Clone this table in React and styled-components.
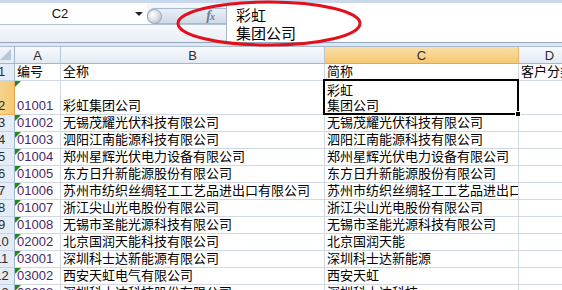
import React from 'react';
import styled, { createGlobalStyle } from 'styled-components';

const Global = createGlobalStyle`
  html, body { margin: 0; padding: 0; background: #fff; }
  body { font-family: "Liberation Sans", "Noto Sans CJK SC", sans-serif; }
  * { box-sizing: border-box; }
`;

const Screen = styled.div`
  position: relative;
  width: 562px;
  height: 290px;
  overflow: hidden;
  background: #fff;
`;

const FormulaBar = styled.div`
  display: flex;
  height: 42px;
  border-top: 3px solid #c9d8ea;
`;

const LeftPane = styled.div`
  display: flex;
  flex-direction: column;
  width: 226px;
`;

const NameRow = styled.div`
  display: flex;
  height: 22px;
`;

const NameBox = styled.div`
  display: flex;
  align-items: center;
  width: 147px;
  background: #fff;
  border-bottom: 1px solid #b4c3d6;
`;

const NameText = styled.span`
  width: 120px;
  text-align: center;
  font-size: 13px;
  color: #111;
`;

const Arrow = styled.span`
  margin-left: auto;
  margin-right: 4px;
  width: 0;
  height: 0;
  border-left: 4px solid transparent;
  border-right: 4px solid transparent;
  border-top: 4px solid #222;
`;

const ButtonStrip = styled.div`
  flex: 1;
  padding-top: 5px;
  background: #f2f6fb;
  border-bottom: 1px solid #b4c3d6;
`;

const Pill = styled.div`
  display: flex;
  align-items: center;
  height: 16px;
  border: 1px solid #a9bace;
  border-right: none;
  border-radius: 8px 0 0 8px;
  background: linear-gradient(#e9eff6, #cfdae7);
`;

const RoundButton = styled.span`
  width: 15px;
  height: 15px;
  margin-left: -1px;
  border-radius: 50%;
  border: 1px solid #9ba7b5;
  background: radial-gradient(circle at 35% 35%, #ffffff 0%, #dfe3e8 45%, #aab3be 100%);
`;

const Fx = styled.span`
  margin-left: auto;
  margin-right: 12px;
  font-family: "Liberation Serif", serif;
  font-style: italic;
  font-weight: bold;
  font-size: 14px;
  color: #6c7d93;
  letter-spacing: -1px;
`;

const FxSub = styled.span`
  font-size: 10px;
`;

const Filler = styled.div`
  flex: 1;
  background: linear-gradient(#f6f9fc, #e8eef5);
`;

const FormulaInput = styled.div`
  flex: 1;
  background: #fff;
  border-left: 1px solid #a7b7cb;
  padding: 3px 9px 0;
  font-family: "Noto Sans CJK SC", sans-serif;
  font-size: 15px;
  line-height: 18px;
  color: #000;
`;

const Separator = styled.div`
  height: 5px;
  border-top: 1px solid #94a7bf;
  border-bottom: 1px solid #a9bbd1;
  background: #dde6f1;
`;

const Grid = styled.div`
  display: grid;
  grid-template-columns: 26px 46px 264px 194px 62px 120px;
  grid-template-rows: 17px 17px 34px repeat(11, 17px);
  margin-left: -11px;
`;

const ColHead = styled.div`
  display: flex;
  align-items: center;
  justify-content: center;
  font-size: 13px;
  color: #2d2d2d;
  border-right: 1px solid ${(p) => (p.$sel ? '#f2b35a' : '#b5c6da')};
  border-bottom: 1px solid ${(p) => (p.$sel ? '#f2a34a' : '#9eb6ce')};
  background: ${(p) =>
    p.$sel ? 'linear-gradient(#fadfaa, #f4c872)' : 'linear-gradient(#f8fafd, #e3eaf4)'};
`;

const Corner = styled.div`
  position: relative;
  border-right: 1px solid #9eb6ce;
  border-bottom: 1px solid #9eb6ce;
  background: linear-gradient(#f3f6fa, #e3eaf4);
  &::after {
    content: '';
    position: absolute;
    right: 3px;
    bottom: 3px;
    width: 0;
    height: 0;
    border-left: 11px solid transparent;
    border-bottom: 11px solid #b6c7dc;
  }
`;

const RowHead = styled.div`
  display: flex;
  align-items: flex-end;
  justify-content: center;
  padding-bottom: 1px;
  font-size: 13px;
  line-height: 15px;
  color: #2d2d2d;
  border-right: 1px solid ${(p) => (p.$sel ? '#f2a34a' : '#9eb6ce')};
  border-bottom: 1px solid ${(p) => (p.$sel ? '#f2b35a' : '#c5d3e3')};
  background: ${(p) =>
    p.$sel ? 'linear-gradient(90deg, #f9dba2, #f4c872)' : '#e4ecf7'};
`;

const Cell = styled.div`
  position: relative;
  display: flex;
  flex-direction: column;
  justify-content: flex-end;
  padding: 0 2px 1px 2px;
  white-space: nowrap;
  overflow: ${(p) => (p.$active || p.$spill ? 'visible' : 'hidden')};
  font-size: 13px;
  line-height: 15px;
  color: ${(p) => (p.$code ? '#47286b' : '#000')};
  border-right: 1px solid ${(p) => (p.$spill ? 'transparent' : '#d0d7e5')};
  border-bottom: 1px solid #d0d7e5;
  ${(p) =>
    p.$flag &&
    `&::before {
      content: '';
      position: absolute;
      top: 0;
      left: 0;
      width: 0;
      height: 0;
      border-top: 6px solid #1c8c1c;
      border-right: 6px solid transparent;
    }`}
`;

const Selection = styled.div`
  position: absolute;
  left: -2px;
  top: -2px;
  right: -1px;
  bottom: -1px;
  border: 2px solid #000;
  z-index: 2;
  pointer-events: none;
`;

const FillHandle = styled.div`
  position: absolute;
  right: -4px;
  bottom: -4px;
  width: 6px;
  height: 6px;
  background: #000;
  border: 1px solid #fff;
`;

const Ellipse = styled.svg`
  position: absolute;
  left: 174px;
  top: 0;
  z-index: 5;
  pointer-events: none;
`;

const rows = [
  ['01002', '无锡茂耀光伏科技有限公司', '无锡茂耀光伏科技有限公司'],
  ['01003', '泗阳江南能源科技有限公司', '泗阳江南能源科技有限公司'],
  ['01004', '郑州星辉光伏电力设备有限公司', '郑州星辉光伏电力设备有限公司'],
  ['01005', '东方日升新能源股份有限公司', '东方日升新能源股份有限公司'],
  ['01006', '苏州市纺织丝绸轻工工艺品进出口有限公司', '苏州市纺织丝绸轻工工艺品进出口有限公司'],
  ['01007', '浙江尖山光电股份有限公司', '浙江尖山光电股份有限公司'],
  ['01008', '无锡市圣能光源科技有限公司', '无锡市圣能光源科技有限公司'],
  ['02002', '北京国润天能科技有限公司', '北京国润天能'],
  ['03001', '深圳科士达新能源有限公司', '深圳科士达新能源'],
  ['03002', '西安天虹电气有限公司', '西安天虹'],
  ['03003', '深圳科士达科技股份有限公司', '深圳科士达科技'],
];

export default function App() {
  return (
    <>
      <Global />
      <Screen>
        <FormulaBar>
          <LeftPane>
            <NameRow>
              <NameBox>
                <NameText>C2</NameText>
                <Arrow />
              </NameBox>
              <ButtonStrip>
                <Pill>
                  <RoundButton />
                  <Fx>
                    f<FxSub>x</FxSub>
                  </Fx>
                </Pill>
              </ButtonStrip>
            </NameRow>
            <Filler />
          </LeftPane>
          <FormulaInput>
            <div>彩虹</div>
            <div>集团公司</div>
          </FormulaInput>
        </FormulaBar>
        <Separator />
        <Grid>
          <Corner />
          <ColHead>A</ColHead>
          <ColHead>B</ColHead>
          <ColHead $sel>C</ColHead>
          <ColHead>D</ColHead>
          <ColHead>E</ColHead>

          <RowHead>1</RowHead>
          <Cell>编号</Cell>
          <Cell>全称</Cell>
          <Cell>简称</Cell>
          <Cell $spill>客户分类</Cell>
          <Cell />

          <RowHead $sel>2</RowHead>
          <Cell $code $flag>01001</Cell>
          <Cell>彩虹集团公司</Cell>
          <Cell $active>
            <span>彩虹</span>
            <span>集团公司</span>
            <Selection>
              <FillHandle />
            </Selection>
          </Cell>
          <Cell />
          <Cell />

          {rows.map((r, i) => (
            <React.Fragment key={r[0]}>
              <RowHead>{i + 3}</RowHead>
              <Cell $code $flag>{r[0]}</Cell>
              <Cell>{r[1]}</Cell>
              <Cell>{r[2]}</Cell>
              <Cell />
              <Cell />
            </React.Fragment>
          ))}
        </Grid>
        <Ellipse width="190" height="48" viewBox="0 0 190 48">
          <ellipse cx="95" cy="23.5" rx="91" ry="21.5" fill="none" stroke="#e3101c" strokeWidth="3" />
        </Ellipse>
      </Screen>
    </>
  );
}
